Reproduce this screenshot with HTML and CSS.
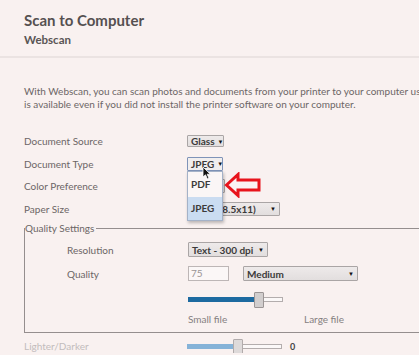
FILE: index.html
```html
<!DOCTYPE html>
<html>
<head>
    <meta charset="UTF-8">
    <title>Scan to Computer</title>
    <link rel="stylesheet" href="styles.css">
</head>
<body>
    <div class="page">
        <h1>Scan to Computer</h1>
        <h2>Webscan</h2>
    </div>
    <hr class="rule">
    <div class="page">
        <p class="intro">With Webscan, you can scan photos and documents from your printer to your computer using your web browser. This feature<br>is available even if you did not install the printer software on your computer.</p>

        <div class="form">
            <div class="row">
                <label>Document Source</label>
                <span class="select w-glass">Glass<i class="caret">&#9660;</i></span>
            </div>
            <div class="row">
                <label>Document Type</label>
                <span class="drop-wrap">
                    <span class="select focused w-type">JPEG<i class="caret">&#9660;</i></span>
                    <!-- open dropdown list -->
                    <span class="dropdown">
                        <span class="opt">PDF</span>
                        <span class="opt picked">JPEG</span>
                    </span>
                    <!-- mouse pointer -->
                    <svg class="pointer" width="9" height="14" viewBox="0 0 9 14">
                        <path d="M1 1 L1 11 L3.5 8.8 L5.4 13 L7 12.3 L5.2 8.2 L8.3 8.2 Z" fill="#111" stroke="#fff" stroke-width="0.8"/>
                    </svg>
                    <!-- red annotation arrow -->
                    <svg class="callout" width="38" height="26" viewBox="0 0 38 26">
                        <polygon points="2.5,13 14,2.5 14,8 35,8 35,18 14,18 14,23.5" fill="#faf3f3" stroke="#e8141c" stroke-width="3" stroke-linejoin="miter"/>
                    </svg>
                </span>
            </div>
            <div class="row">
                <label>Color Preference</label>
                <span class="select w-color">Color<i class="caret">&#9660;</i></span>
            </div>
            <div class="row">
                <label>Paper Size</label>
                <span class="select w-paper">Letter (8.5x11)<i class="caret">&#9660;</i></span>
            </div>
        </div>

        <fieldset class="quality">
            <legend>Quality Settings</legend>
            <div class="qrow q-res">
                <label>Resolution</label>
                <span class="select w-res">Text - 300 dpi<i class="caret">&#9660;</i></span>
            </div>
            <div class="qrow q-qual">
                <label>Quality</label>
                <span class="controls">
                    <span class="num">75</span>
                    <span class="select w-med">Medium<i class="caret">&#9660;</i></span>
                </span>
            </div>
            <div class="qrow q-slide">
                <span></span>
                <span class="slider">
                    <span class="fill" style="width: 68px"></span>
                    <span class="thumb" style="left: 65px"></span>
                </span>
            </div>
            <div class="qrow q-scale">
                <span></span>
                <span class="scale"><span>Small file</span><span>Large file</span></span>
            </div>
        </fieldset>

        <div class="row dim">
            <label>Lighter/Darker</label>
            <span class="controls">
                <span class="slider light">
                    <span class="fill" style="width: 48px"></span>
                    <span class="thumb" style="left: 45px"></span>
                </span>
                <span class="val">0</span>
            </span>
        </div>
    </div>
</body>
</html>
```

FILE: styles.css
```css
html, body {
    overflow: hidden;
}
body {
    margin: 0;
    background-color: #f9f1f0;
    font-family: Lato, "Open Sans", sans-serif;
    color: #6c6666;
}
.page {
    padding-left: 24px;
}
h1 {
    margin: 0;
    padding-top: 10px;
    font-size: 15px;
    line-height: 20px;
    font-weight: bold;
    color: #555050;
}
h2 {
    margin: 2px 0 0 0;
    font-size: 11.5px;
    line-height: 16px;
    font-weight: bold;
    color: #5a5555;
}
.rule {
    margin: 8px 0 0 0;
    border: none;
    height: 2px;
    background-color: #ebe3e2;
}
.intro {
    margin: 27px 0 0 0;
    font-size: 10px;
    line-height: 12.5px;
    white-space: nowrap;
}
.form {
    margin-top: 20px;
}
.row {
    display: grid;
    grid-template-columns: 163px auto;
    align-items: center;
    height: 22.5px;
    font-size: 10px;
}
.select {
    display: inline-flex;
    align-items: center;
    justify-content: space-between;
    box-sizing: border-box;
    height: 14px;
    padding: 0 3px;
    background: linear-gradient(#eeeaea, #e2dede);
    border: 1px solid #aaa5a5;
    border-radius: 1px;
    font-size: 10px;
    font-weight: bold;
    color: #3c3a3a;
    white-space: nowrap;
}
.caret {
    font-style: normal;
    font-size: 6px;
    color: #111;
    margin-left: 3px;
}
.w-glass { width: 37px; height: 12px; }
.w-type { width: 36px; }
.w-color { width: 38px; }
.w-paper { width: 93px; }
.w-res { width: 80px; height: 15px; }
.w-med { width: 115px; height: 15px; }
.focused {
    border-color: #7f93b8;
    background: #f1eeee;
}
.drop-wrap {
    position: relative;
    display: inline-flex;
}
.dropdown {
    position: absolute;
    left: 0;
    top: 14px;
    width: 36px;
    display: flex;
    flex-direction: column;
    box-sizing: border-box;
    border: 1px solid #a4b2c8;
    background: #faf6f6;
    box-shadow: 1px 2px 3px rgba(0, 0, 0, 0.25);
    z-index: 2;
}
.opt {
    height: 25px;
    line-height: 25px;
    padding-left: 3px;
    font-size: 10px;
    font-weight: bold;
    color: #3c3a3a;
}
.opt.picked {
    height: 23px;
    line-height: 23px;
    background: #cadcf1;
}
.pointer {
    position: absolute;
    left: 15px;
    top: 9px;
    z-index: 3;
}
.callout {
    position: absolute;
    left: 37px;
    top: 15px;
    z-index: 3;
}
.quality {
    margin: 2px 0 0 0;
    padding: 0 0 7px 0;
    width: 520px;
    border: 1px solid #958e8e;
    font-size: 10px;
}
.quality legend {
    padding: 0 2px 0 0;
    font-size: 10px;
    line-height: 12px;
}
.qrow {
    display: grid;
    grid-template-columns: 121px auto;
    align-items: center;
    padding-left: 42px;
}
.q-res { margin-top: 8px; height: 15px; }
.q-qual { margin-top: 9px; height: 15px; }
.q-slide { margin-top: 11px; height: 15px; }
.q-scale { margin-top: 6px; height: 12px; }
.controls {
    display: flex;
    align-items: center;
}
.num {
    box-sizing: border-box;
    width: 41px;
    height: 15px;
    margin-right: 14px;
    padding-left: 2px;
    border: 1px solid #bdb6b6;
    background: #fbf7f7;
    font-size: 10px;
    line-height: 13px;
    color: #9a9494;
}
.slider {
    position: relative;
    display: block;
    width: 95px;
    height: 5px;
    box-sizing: border-box;
    border: 1px solid #b3adad;
    background: #fbf8f8;
}
.slider .fill {
    position: absolute;
    left: -1px;
    top: -1px;
    height: 5px;
    background: #1d6aa0;
}
.slider .thumb {
    position: absolute;
    top: -6px;
    width: 8px;
    height: 14px;
    border: 1px solid #9b9595;
    background: #d2cece;
    border-radius: 1px;
}
.scale {
    display: grid;
    grid-template-columns: 116px auto;
    font-size: 10px;
    color: #858080;
}
.row.dim {
    margin-top: 6px;
    height: 14px;
}
.dim label {
    color: #c2bcbc;
}
.slider.light .fill {
    background: #86b3d8;
}
.slider.light .thumb {
    background: #dedada;
    border-color: #b1abab;
}
.val {
    margin-left: 8px;
    font-size: 9px;
    font-weight: bold;
    color: #444;
}
```
